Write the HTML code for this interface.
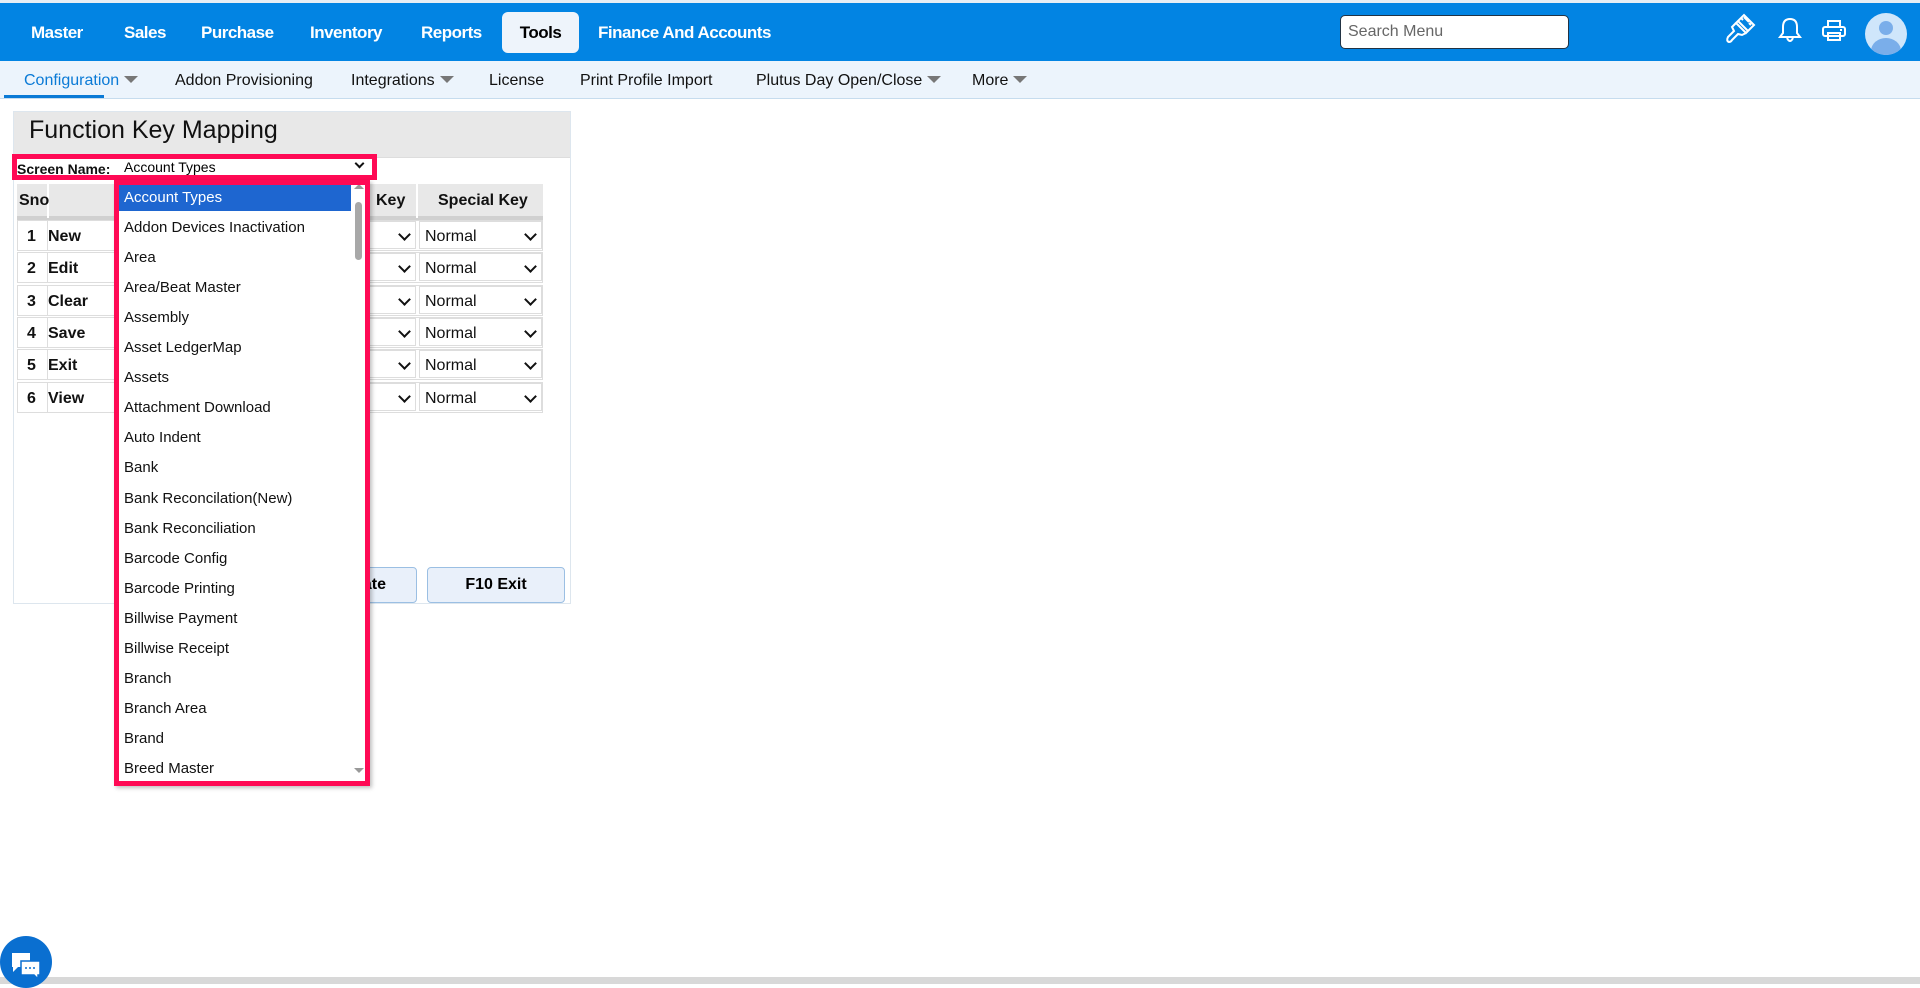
<!DOCTYPE html>
<html><head><meta charset="utf-8"><style>
*{box-sizing:border-box;margin:0;padding:0}
body{width:1920px;height:984px;position:relative;background:#fff;font-family:"Liberation Sans",Arial,sans-serif;overflow:hidden}
.top{position:absolute;left:0;top:0;width:1920px;height:61px;background:#0284e3;border-top:3px solid #e6eef5}
.nav{position:absolute;top:20px;color:#fff;font-weight:bold;font-size:17px;letter-spacing:-0.5px}
.tools{position:absolute;left:502px;top:12px;width:77px;height:41px;background:#eef4fb;border-radius:6px;color:#000;font-weight:bold;font-size:17px;text-align:center;line-height:41px;letter-spacing:-0.5px}
.search{position:absolute;left:1340px;top:15px;width:229px;height:34px;background:#fff;border:1px solid #234;border-radius:5px;color:#666;font-size:16px;padding-left:7px;line-height:32px}
.sub{position:absolute;left:0;top:61px;width:1920px;height:38px;background:#ecf4fc;border-bottom:1px solid #c6dcee}
.si{position:absolute;top:11px;font-size:16px;color:#111}
.arr{display:inline-block;width:0;height:0;border-left:7px solid transparent;border-right:7px solid transparent;border-top:7px solid #777;margin-left:5px;vertical-align:2px}
.panel{position:absolute;left:13px;top:111px;width:558px;height:493px;border:1px solid #dde6ee}
.ph{height:46px;background:#e8e8e8;border-bottom:1px solid #ddd;font-size:25px;padding-left:15px;line-height:36px;color:#111}
.red{position:absolute;border:5px solid #ff0a55}
.dd{position:absolute;left:114px;top:180px;width:256px;height:606px;background:#fff;box-shadow:2px 2px 4px rgba(0,0,0,.25)}
.it{position:absolute;left:10px;font-size:15px;color:#111}
.cell{position:absolute;font-size:16px;font-weight:bold;color:#111}
.sel{position:absolute;border:1px solid #ddd;background:#fff;font-size:16px;height:28px;line-height:29px;padding-left:5px;color:#111}
.chev{position:absolute;right:6px;top:8px;width:9px;height:9px;border-right:2px solid #111;border-bottom:2px solid #111;transform:rotate(45deg)}
.btn{position:absolute;top:567px;height:36px;background:#e9f0fa;border:1px solid #9bbfe3;border-radius:4px;font-weight:bold;font-size:16px;text-align:center;line-height:34px}
</style></head><body>
<div class="top">
<span class="nav" style="left:31px">Master</span>
<span class="nav" style="left:124px">Sales</span>
<span class="nav" style="left:201px">Purchase</span>
<span class="nav" style="left:310px">Inventory</span>
<span class="nav" style="left:421px">Reports</span>
<span class="nav" style="left:598px">Finance And Accounts</span>
</div>
<div class="tools">Tools</div>
<div class="search">Search Menu</div>
<svg style="position:absolute;left:1724px;top:13px" width="32" height="32" viewBox="0 0 32 32" fill="none" stroke="#fff" stroke-width="2"><path d="M12 10 L20 2 L30 12 L22 20 Z M14 8 L24 18 M17 5 l2 2 M20 4 l3 3 M23 7 l2 2 M25 10 l2 2"/><path d="M12 10 L8 14 L10 18 L4 24 Q2 28 5 29 Q7 29 8 27 L14 21 L18 22 L22 20"/></svg>
<svg style="position:absolute;left:1778px;top:17px" width="24" height="27" viewBox="0 0 24 27" fill="none" stroke="#fff" stroke-width="2"><path d="M12 2 Q5 2 5 10 L5 16 L2 20 L22 20 L19 16 L19 10 Q19 2 12 2 Z M9 21 Q12 27 15 21"/></svg>
<svg style="position:absolute;left:1821px;top:20px" width="26" height="22" viewBox="0 0 26 22" fill="none" stroke="#fff" stroke-width="2"><rect x="7" y="1" width="12" height="6"/><rect x="2" y="7" width="22" height="9" rx="2"/><rect x="7" y="13" width="12" height="7"/><path d="M19 10 h2"/></svg>
<div style="position:absolute;left:1865px;top:13px;width:42px;height:42px;border-radius:50%;background:#cfe6fb;overflow:hidden"><div style="position:absolute;left:14px;top:8px;width:14px;height:14px;border-radius:50%;background:#7aaeea"></div><div style="position:absolute;left:6px;top:25px;width:30px;height:26px;border-radius:50%;background:#7aaeea"></div></div>
<div class="sub">
<span class="si" style="left:24px;color:#0a7ad6">Configuration<span class="arr"></span></span>
<div style="position:absolute;left:4px;top:34px;width:100px;height:3px;background:#0a7ad6"></div>
<span class="si" style="left:175px">Addon Provisioning</span>
<span class="si" style="left:351px">Integrations<span class="arr"></span></span>
<span class="si" style="left:489px">License</span>
<span class="si" style="left:580px">Print Profile Import</span>
<span class="si" style="left:756px">Plutus Day Open/Close<span class="arr"></span></span>
<span class="si" style="left:972px">More<span class="arr"></span></span>
</div>
<div class="panel"><div class="ph">Function Key Mapping</div></div>
<div style="position:absolute;left:17px;top:161px;font-size:14px;font-weight:bold;color:#111">Screen Name:</div>
<div style="position:absolute;left:118px;top:157px;width:253px;height:20px;background:#fff;font-size:14px;padding-left:6px;line-height:20px">Account Types<div class="chev" style="top:3px;right:8px;width:7px;height:7px"></div></div>
<div class="red" style="left:12px;top:154px;width:365px;height:26px"></div>
<div style="position:absolute;left:17px;top:184px;width:526px;height:34px;background:#e8e8e8"></div>
<div style="position:absolute;left:17px;top:216px;width:526px;height:4px;background:#d0d0d0"></div>
<div style="position:absolute;left:47px;top:184px;width:2px;height:34px;background:#fff"></div>
<div style="position:absolute;left:416px;top:184px;width:2px;height:34px;background:#fff"></div>
<div class="cell" style="left:19px;top:192px">Sno</div>
<div class="cell" style="left:376px;top:192px">Key</div>
<div class="cell" style="left:438px;top:192px">Special Key</div>
<div id="rows"></div>
<div class="btn" style="left:300px;width:117px;text-align:right;padding-right:30px">F9 Update</div>
<div class="btn" style="left:427px;width:138px">F10 Exit</div>
<div class="dd">
<div style="position:absolute;left:5px;top:4px;width:232px;height:27px;background:#1e66d0"></div>
<div style="position:absolute;left:238px;top:0;width:14px;height:606px;background:#fff"></div>
<div style="position:absolute;left:240px;top:4px;width:0;height:0;border-left:5px solid transparent;border-right:5px solid transparent;border-bottom:5px solid #999"></div>
<div style="position:absolute;left:241px;top:22px;width:7px;height:58px;background:#a8a8a8;border-radius:4px"></div>
<div style="position:absolute;left:240px;top:588px;width:0;height:0;border-left:5px solid transparent;border-right:5px solid transparent;border-top:5px solid #999"></div>
</div>
<div class="red" style="left:114px;top:180px;width:256px;height:606px;box-shadow:none"></div>
<script>
var names=["New","Edit","Clear","Save","Exit","View"],h="";
for(var i=0;i<6;i++){var y=220+i*32.3;
h+='<div style="position:absolute;left:17px;top:'+y+'px;width:526px;height:31px;border:1px solid #ddd"></div>';
h+='<div style="position:absolute;left:47px;top:'+y+'px;width:1px;height:31px;background:#ddd"></div>';
h+='<div class="cell" style="left:27px;top:'+(y+8)+'px">'+(i+1)+'</div><div class="cell" style="left:48px;top:'+(y+8)+'px">'+names[i]+'</div>';
h+='<div class="sel" style="left:360px;top:'+(y+1)+'px;width:56px"><div class="chev"></div></div>';
h+='<div class="sel" style="left:419px;top:'+(y+1)+'px;width:123px">Normal<div class="chev"></div></div>';}
document.getElementById("rows").innerHTML=h;
var it=["Account Types","Addon Devices Inactivation","Area","Area/Beat Master","Assembly","Asset LedgerMap","Assets","Attachment Download","Auto Indent","Bank","Bank Reconcilation(New)","Bank Reconciliation","Barcode Config","Barcode Printing","Billwise Payment","Billwise Receipt","Branch","Branch Area","Brand","Breed Master"],d=document.querySelector(".dd"),s="";
for(var j=0;j<it.length;j++){s+='<div class="it" style="top:'+(9+j*30.05)+'px;'+(j==0?'color:#fff':'')+'">'+it[j]+'</div>';}
d.insertAdjacentHTML("beforeend",s);
</script>
<div style="position:absolute;left:0;top:977px;width:1920px;height:7px;background:#d8d8d8"></div>
<div style="position:absolute;left:0;top:936px;width:52px;height:52px;border-radius:50%;background:#0a6fd0"></div>
<svg style="position:absolute;left:10px;top:951px" width="32" height="28" viewBox="0 0 32 28"><path d="M2 2 h18 v14 h-12 l-5 5 v-5 h-1 z" fill="#fff"/><path d="M11 10 h19 v14 h-2 v4 l-4 -4 h-13 z" fill="#fff" stroke="#0a6fd0" stroke-width="1.5"/><circle cx="16" cy="17" r="1" fill="#0a6fd0"/><circle cx="20" cy="17" r="1" fill="#0a6fd0"/><circle cx="24" cy="17" r="1" fill="#0a6fd0"/></svg>
</body></html>
